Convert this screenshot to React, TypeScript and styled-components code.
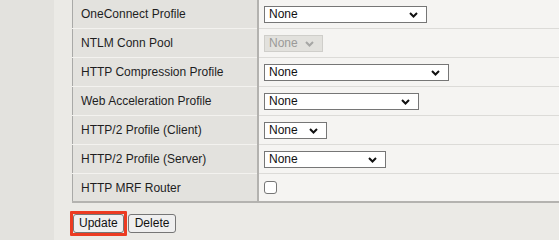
import React from "react";
import styled, { createGlobalStyle } from "styled-components";

const GlobalStyle = createGlobalStyle`
  html, body {
    margin: 0;
    padding: 0;
    background: #ebeae6;
    font-family: "Liberation Sans", Arial, sans-serif;
    font-size: 12px;
    color: #222;
  }
`;

const Page = styled.div`
  display: flex;
  width: 559px;
  height: 240px;
  overflow: hidden;
`;

const Sidebar = styled.div`
  width: 54px;
  flex: none;
  background: #e3e2de;
`;

const Main = styled.div`
  flex: 1;
  padding-left: 18px;
  overflow: hidden;
`;

const Table = styled.table`
  width: 620px;
  border-collapse: collapse;
  border-left: 1px solid #a9a9a7;
  border-bottom: 2px solid #b4b3b0;
`;

const Label = styled.td<{ $last?: boolean }>`
  width: 176px;
  height: ${(p) => (p.$last ? 27 : 28)}px;
  padding: 0 0 0 8px;
  background: #e3e2de;
  border-bottom: ${(p) => (p.$last ? "0" : "1px solid #f3f2ef")};
  border-right: 2px solid #b3b2af;
  color: #1e1e1e;
  vertical-align: middle;
`;

const Value = styled.td<{ $last?: boolean }>`
  height: ${(p) => (p.$last ? 27 : 28)}px;
  padding: 0 0 0 5px;
  background: #f5f4f2;
  border-bottom: ${(p) => (p.$last ? "0" : "1px solid #dcdbd8")};
  vertical-align: middle;
`;

const SelectBox = styled.div<{ $w: number; $disabled?: boolean }>`
  position: relative;
  display: flex;
  align-items: center;
  box-sizing: border-box;
  width: ${(p) => p.$w}px;
  height: 17px;
  padding-left: 4px;
  border: 1px solid ${(p) => (p.$disabled ? "#cfceca" : "#767676")};
  background: ${(p) => (p.$disabled ? "#e2e1dd" : "#fff")};
  color: ${(p) => (p.$disabled ? "#9a9a98" : "#111")};
  font-size: 12px;
`;

const Chevron = styled.svg<{ $disabled?: boolean }>`
  position: absolute;
  right: 8px;
  top: 5px;
  width: 9px;
  height: 6px;
  stroke: ${(p) => (p.$disabled ? "#a6a6a4" : "#111")};
`;

const Check = styled.div`
  width: 13px;
  height: 13px;
  box-sizing: border-box;
  border: 1px solid #767676;
  border-radius: 3px;
  background: #fff;
`;

const Actions = styled.div`
  display: flex;
  align-items: center;
  gap: 1px;
  margin: 8px 0 0 -2px;
`;

const Highlight = styled.div`
  display: flex;
  border: 3px solid #ec3b22;
  border-radius: 1px;
`;

const Button = styled.button<{ $pad: number }>`
  height: 19px;
  padding: 0 ${(p) => p.$pad}px;
  font-family: "Liberation Sans", Arial, sans-serif;
  font-size: 12px;
  color: #111;
  background: #efefef;
  border: 1px solid #767676;
  border-radius: 3px;
  line-height: 17px;
`;

type Row = { label: string; width?: number; disabled?: boolean; checkbox?: boolean };

const rows: Row[] = [
  { label: "OneConnect Profile", width: 163 },
  { label: "NTLM Conn Pool", width: 59, disabled: true },
  { label: "HTTP Compression Profile", width: 185 },
  { label: "Web Acceleration Profile", width: 155 },
  { label: "HTTP/2 Profile (Client)", width: 63 },
  { label: "HTTP/2 Profile (Server)", width: 122 },
  { label: "HTTP MRF Router", checkbox: true },
];

function Select({ width, disabled }: { width: number; disabled?: boolean }) {
  return (
    <SelectBox $w={width} $disabled={disabled}>
      None
      <Chevron $disabled={disabled} viewBox="0 0 9 6" fill="none" strokeWidth={2}>
        <path d="M1 1 L4.5 4.5 L8 1" />
      </Chevron>
    </SelectBox>
  );
}

export default function App() {
  return (
    <>
      <GlobalStyle />
      <Page>
        <Sidebar />
        <Main>
          <Table>
            <tbody>
              {rows.map((r, i) => {
                const last = i === rows.length - 1;
                return (
                  <tr key={r.label}>
                    <Label $last={last}>{r.label}</Label>
                    <Value $last={last}>
                      {r.checkbox ? <Check /> : <Select width={r.width!} disabled={r.disabled} />}
                    </Value>
                  </tr>
                );
              })}
            </tbody>
          </Table>
          <Actions>
            <Highlight>
              <Button $pad={5}>Update</Button>
            </Highlight>
            <Button $pad={6}>Delete</Button>
          </Actions>
        </Main>
      </Page>
    </>
  );
}
